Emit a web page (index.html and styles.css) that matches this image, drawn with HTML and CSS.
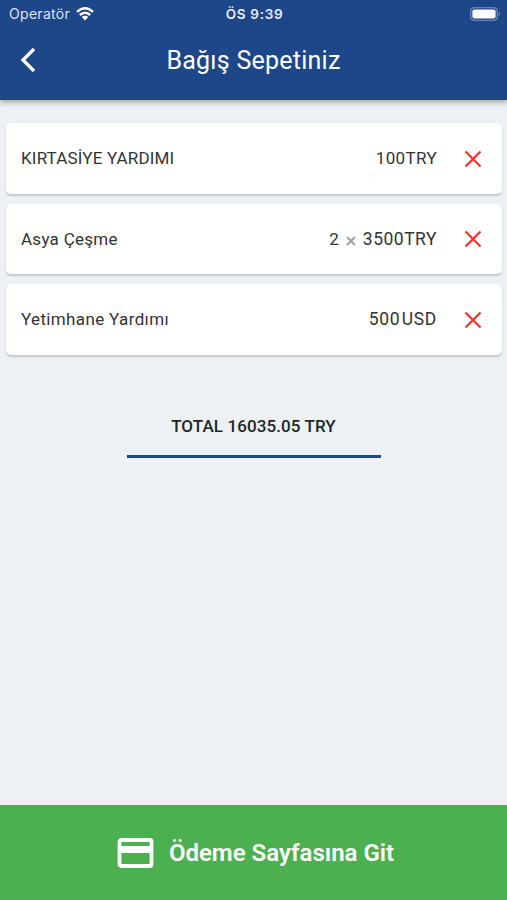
FILE: index.html
```html
<!DOCTYPE html>
<html lang="tr">
<head>
<meta charset="utf-8">
<title>Bağış Sepetiniz</title>
<link rel="stylesheet" href="styles.css">
</head>
<body>
<header class="header">
  <div class="status">
    <div class="carrier"><span class="carrier-name">Operatör</span>
      <svg class="wifi" viewBox="0 0 18 14"><path d="M1 4.8Q9-2.2 17 4.8M3.8 8Q9 3.6 14.2 8" fill="none" stroke="#fff" stroke-width="2.3"/><path d="M5.8 10Q9 7.5 12.2 10L9 13.4Z" fill="#fff"/></svg>
    </div>
    <span class="clock">ÖS 9:39</span>
    <svg class="battery" viewBox="0 0 31 14"><rect x=".7" y=".7" width="26.6" height="12.6" rx="3.6" fill="none" stroke="#7d94c0" stroke-width="1.1"/><rect x="2.4" y="2.4" width="23.2" height="9.2" rx="2" fill="#fff"/><path d="M28.8 4.8Q31 7 28.8 9.2Z" fill="#7d94c0"/></svg>
  </div>
  <div class="bar">
    <svg class="back" viewBox="0 0 16 26"><path d="M14 2L3 13L14 24" fill="none" stroke="#fff" stroke-width="3.3"/></svg>
    <h1 class="title">Bağış Sepetiniz</h1>
  </div>
</header>
<main class="cart">
  <article class="card"><span class="name name-caps">KIRTASİYE YARDIMI</span><span class="price price-100">100TRY</span><svg class="remove" viewBox="0 0 18 18"><path d="M1.5 1.5L16.5 16.5M16.5 1.5L1.5 16.5"/></svg></article>
  <article class="card"><span class="name name-asya">Asya Çeşme</span><span class="qty">2</span><svg class="times" viewBox="0 0 10 10"><path d="M1 1L9 9M9 1L1 9"/></svg><span class="price price-3500">3500TRY</span><svg class="remove" viewBox="0 0 18 18"><path d="M1.5 1.5L16.5 16.5M16.5 1.5L1.5 16.5"/></svg></article>
  <article class="card"><span class="name name-yetim">Yetimhane Yardımı</span><span class="price price-500">500<span class="usd">USD</span></span><svg class="remove" viewBox="0 0 18 18"><path d="M1.5 1.5L16.5 16.5M16.5 1.5L1.5 16.5"/></svg></article>
  <div class="total"><span>TOTAL 16035.05 TRY</span></div>
</main>
<footer class="pay">
  <svg class="credit" viewBox="0 0 36 30"><rect x="2" y="2" width="32" height="26" rx="1.8" fill="none" stroke="#fff" stroke-width="3.8"/><path d="M2 8H34V15H2Z" fill="#fff"/></svg>
  <span class="pay-label">Ödeme Sayfasına Git</span>
</footer>
</body>
</html>
```
FILE: styles.css
```css
* { box-sizing: border-box; }
body {
  margin: 0;
  height: 900px;
  display: flex;
  flex-direction: column;
  background: #edf1f3;
  color: #333;
  font-family: Roboto, "Liberation Sans", sans-serif;
  overflow: hidden;
}
svg { display: block; flex: none; }
.header {
  height: 99.5px;
  background: #1e478a;
  color: #fff;
  box-shadow: 0 2px 6px rgba(0, 0, 0, .35);
}
.status {
  height: 27px;
  padding: 0 6px 0 9px;
  display: grid;
  grid-template-columns: 1fr auto 1fr;
  align-items: center;
  font-family: Inter, sans-serif;
}
.carrier { display: flex; align-items: center; gap: 6px; font-size: 14px; color: #dce4f2; }
.carrier-name { letter-spacing: .3px; }
.wifi { width: 18px; height: 14px; }
.clock { font-size: 13.5px; font-weight: 600; color: #e6ecf7; letter-spacing: .7px; margin-right: 1px; }
.battery { width: 31px; height: 14px; justify-self: end; }
.bar {
  height: 66px;
  padding: 0 20px;
  display: grid;
  grid-template-columns: 1fr auto 1fr;
  align-items: center;
}
.back { width: 16px; height: 26px; }
.title { margin: 0; font-size: 25px; font-weight: 400; letter-spacing: .25px; white-space: nowrap; }
.cart {
  flex: 1;
  padding: 23.5px 5px 0 6px;
  display: flex;
  flex-direction: column;
  gap: 10px;
}
.card {
  height: 70.5px;
  padding: 0 20px 0 15px;
  display: flex;
  align-items: center;
  background: #fff;
  border-radius: 5px;
  box-shadow: 0 1.5px 2px rgba(0, 0, 0, .17);
  font-size: 17px;
  white-space: nowrap;
}
.name { margin-right: auto; }
.name-caps { letter-spacing: .17px; }
.name-asya { letter-spacing: .28px; }
.name-yetim { letter-spacing: .36px; }
.price { margin-right: 27px; }
.price-100 { letter-spacing: .35px; }
.price-3500 { font-size: 17.5px; letter-spacing: .5px; }
.price-500 { font-size: 17.5px; letter-spacing: .65px; }
.remove { width: 18px; height: 18px; margin-top: 1px; fill: none; stroke: #ec3b32; stroke-width: 2.4; }
.times { width: 10px; height: 10px; margin: 4px 7px 0 7px; fill: none; stroke: #a0a0a0; stroke-width: 2; }
.usd { margin-left: 1.5px; }
.total {
  width: 254px;
  height: 65px;
  margin: 28.5px auto 0;
  padding: 23px 1px 0 0;
  border-bottom: 3px solid #1f488b;
  text-align: center;
  font-size: 17px;
  font-weight: 500;
  line-height: 20px;
  letter-spacing: .1px;
  color: #222628;
  white-space: nowrap;
}
.pay {
  height: 95px;
  display: flex;
  align-items: center;
  justify-content: center;
  gap: 15px;
  padding-left: 4px;
  background: #4caf50;
  color: #fff;
}
.credit { width: 37px; height: 30px; }
.pay-label { font-size: 24px; font-weight: 600; white-space: nowrap; }
```
